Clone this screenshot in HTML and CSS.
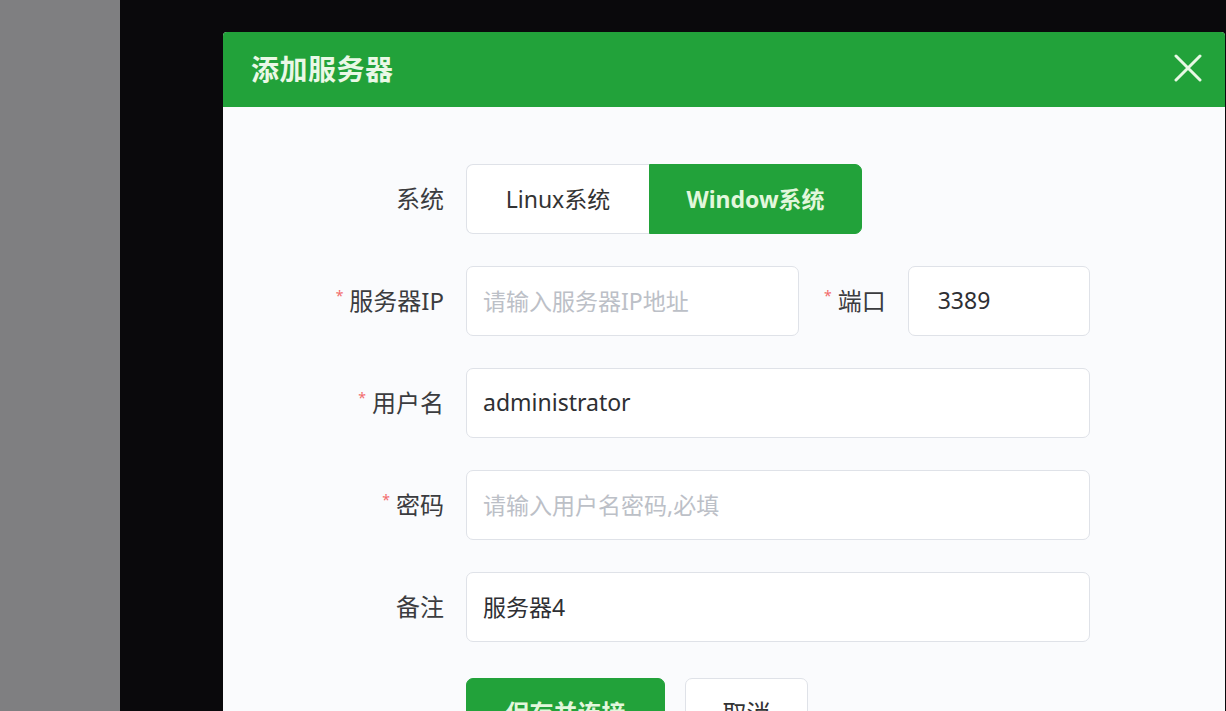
FILE: index.html
```html
<!DOCTYPE html>
<html lang="zh">
<head>
<meta charset="utf-8">
<title>添加服务器</title>
<link rel="stylesheet" href="styles.css">
</head>
<body>
<div class="screen">
  <div class="side"></div>
  <div class="overlay">
    <div class="dialog">
      <div class="dialog-header">
        <span class="dialog-title">添加服务器</span>
        <svg class="close" viewBox="0 0 28 28" width="28" height="28"><path d="M2 2 L26 26 M26 2 L2 26" stroke="#e8f8e4" stroke-width="3" stroke-linecap="round" fill="none"/></svg>
      </div>
      <div class="dialog-body">
        <div class="row">
          <label class="label">系统</label>
          <div class="radio-group">
            <div class="radio">Linux系统</div>
            <div class="radio active">Window系统</div>
          </div>
        </div>
        <div class="row">
          <label class="label"><span class="req">*</span>服务器IP</label>
          <div class="input ip"><span class="ph">请输入服务器IP地址</span></div>
          <label class="label port-label"><span class="req">*</span>端口</label>
          <div class="input port"><span class="val">3389</span></div>
        </div>
        <div class="row">
          <label class="label"><span class="req">*</span>用户名</label>
          <div class="input wide"><span class="val">administrator</span></div>
        </div>
        <div class="row">
          <label class="label"><span class="req">*</span>密码</label>
          <div class="input wide"><span class="ph">请输入用户名密码,必填</span></div>
        </div>
        <div class="row">
          <label class="label">备注</label>
          <div class="input wide"><span class="val">服务器4</span></div>
        </div>
        <div class="actions">
          <button class="btn primary">保存并连接</button>
          <button class="btn">取消</button>
        </div>
      </div>
    </div>
  </div>
</div>
</body>
</html>
```

FILE: styles.css
```css
* { box-sizing: border-box; }
html, body { margin: 0; padding: 0; }
body {
  width: 1226px;
  height: 711px;
  overflow: hidden;
  font-family: "Noto Sans", "Noto Sans CJK SC", sans-serif;
  background: #0a090c;
}
.screen { display: flex; height: 711px; }
.side { width: 120px; flex: none; background: #7f7f81; }
.overlay { flex: 1; background: #0a090c; padding: 32px 0 0 103px; }
.dialog {
  width: 1002px;
  height: 700px;
  background: #fafbfd;
  border-radius: 4px 4px 0 0;
  overflow: hidden;
}
.dialog-header {
  height: 75px;
  background: #22a23a;
  display: flex;
  align-items: center;
  justify-content: space-between;
  padding: 0 23px 4px 28px;
}
.dialog-title {
  color: #eaf8e6;
  font-size: 28px;
  font-weight: 700;
  letter-spacing: 0.5px;
  font-family: "Noto Sans CJK SC", sans-serif;
}
.close { display: block; }
.dialog-body { padding-top: 57px; }
.row {
  display: flex;
  align-items: center;
  height: 70px;
  margin-bottom: 32px;
}
.label {
  width: 243px;
  flex: none;
  padding-right: 22px;
  padding-bottom: 3px;
  text-align: right;
  font-size: 24px;
  color: #3b3c3f;
  display: flex;
  justify-content: flex-end;
  align-items: center;
}
.req {
  color: #f26b6b;
  font-size: 14px;
  margin-right: 6px;
  position: relative;
  top: -4px;
}
.radio-group { display: flex; height: 70px; }
.radio {
  height: 70px;
  display: flex;
  align-items: center;
  justify-content: center;
  padding-bottom: 3px;
  font-size: 23px;
  color: #333;
  background: #fff;
  border: 1px solid #dfe2e8;
}
.radio:first-child { width: 183px; border-radius: 7px 0 0 7px; border-right: none; }
.radio.active {
  width: 213px;
  background: #22a23a;
  border-color: #22a23a;
  color: #e2f7dc;
  font-weight: 700;
  border-radius: 0 7px 7px 0;
}
.input {
  height: 70px;
  background: #fff;
  border: 1px solid #dfe2e8;
  border-radius: 7px;
  display: flex;
  align-items: center;
  padding-left: 16px;
  padding-bottom: 3px;
  font-size: 23px;
}
.ip { width: 333px; }
.port-label { width: auto; padding-right: 22px; padding-left: 25px; }
.port { width: 182px; padding-left: 29px; }
.wide { width: 624px; }
.ph { color: #bcc0c7; }
.val { color: #2e2f33; }
.actions {
  display: flex;
  gap: 20px;
  padding-left: 243px;
  margin-top: 36px;
}
.btn {
  height: 70px;
  width: 123px;
  border: 1px solid #dfe2e8;
  border-radius: 7px;
  background: #fff;
  font-family: "Noto Sans CJK SC", sans-serif;
  font-size: 24px;
  color: #333;
  padding: 0 0 3px;
}
.btn.primary {
  width: 199px;
  background: #22a23a;
  border-color: #22a23a;
  color: #e2f7dc;
  font-weight: 700;
}
```
